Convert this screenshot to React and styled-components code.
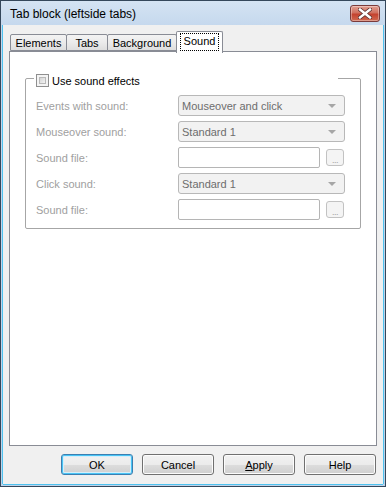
import React from "react";
import styled, { createGlobalStyle } from "styled-components";

const GlobalStyle = createGlobalStyle`
  html, body {
    margin: 0;
    padding: 0;
    background: #ffffff;
  }
  body {
    font-family: "Liberation Sans", Arial, sans-serif;
    font-size: 11px;
  }
`;

const Window = styled.div`
  width: 386px;
  height: 487px;
  box-sizing: border-box;
  border: 1px solid #34475b;
  background: linear-gradient(#d4e3f3, #c2d6ec 30px, #bcd3ea);
  padding: 0 2px 2px 2px;
  display: flex;
  flex-direction: column;
`;

const TitleBar = styled.div`
  height: 24px;
  display: flex;
  align-items: center;
  justify-content: space-between;
  padding: 0 3px 0 7px;
`;

const Title = styled.span`
  font-size: 12px;
  color: #000000;
  margin-top: 1px;
`;

const CloseButton = styled.div`
  width: 30px;
  height: 17px;
  box-sizing: border-box;
  margin-top: 1px;
  border: 1px solid #7a3b3b;
  border-radius: 3px;
  background: linear-gradient(#e2a093, #d0705f 45%, #c4422f 55%, #d06a52);
  box-shadow: inset 0 0 0 1px rgba(255, 255, 255, 0.35);
  display: flex;
  align-items: center;
  justify-content: center;
`;

const Client = styled.div`
  flex: 1;
  background: #f0f0f0;
  box-shadow: -1px 0 0 #4fc2ef, 1px 0 0 #4fc2ef, 0 1px 0 #4fc2ef;
  display: flex;
  flex-direction: column;
  padding: 6px 6px 9px 6px;
  box-sizing: border-box;
`;

const TabRow = styled.div`
  display: flex;
  align-items: flex-end;
  height: 20px;
  padding-left: 1px;
  position: relative;
  z-index: 2;
`;

const Tab = styled.div`
  box-sizing: border-box;
  width: ${(p) => p.$w}px;
  height: ${(p) => (p.$active ? 22 : 17)}px;
  margin-right: -1px;
  margin-bottom: ${(p) => (p.$active ? -2 : 0)}px;
  border: 1px solid #898c95;
  border-bottom: ${(p) => (p.$active ? "none" : "1px solid #898c95")};
  border-radius: 2px 2px 0 0;
  background: ${(p) =>
    p.$active ? "#ffffff" : "linear-gradient(#f3f3f3, #ebebeb 50%, #dedede)"};
  color: #000000;
  display: flex;
  align-items: ${(p) => (p.$active ? "flex-start" : "center")};
  justify-content: center;
  padding-top: ${(p) => (p.$active ? 1 : 0)}px;
  position: relative;
  z-index: ${(p) => (p.$active ? 3 : 1)};
`;

const FocusLabel = styled.span`
  border: 1px dotted #000000;
  padding: 1px 3px 2px;
  line-height: 13px;
`;

const Panel = styled.div`
  flex: 1;
  background: #ffffff;
  border: 1px solid #898c95;
  padding: 26px 15px 0 15px;
`;

const GroupBox = styled.div`
  position: relative;
  border: 1px solid #a6a6a6;
  border-radius: 2px;
  padding: 16px 15px 8px 10px;
  display: grid;
  grid-template-columns: 142px 1fr;
  grid-auto-rows: 21px;
  row-gap: 5px;
  align-items: center;
`;

const Legend = styled.div`
  position: absolute;
  top: -5px;
  left: 8px;
  width: 302px;
  height: 13px;
  padding-left: 2px;
  background: #ffffff;
  display: flex;
  align-items: center;
  gap: 3px;
  color: #000000;
`;

const CheckBox = styled.div`
  width: 13px;
  height: 13px;
  box-sizing: border-box;
  border: 1px solid #8f8f8f;
  background: #f4f4f4;
  padding: 2px;
  &::after {
    content: "";
    display: block;
    width: 100%;
    height: 100%;
    box-sizing: border-box;
    border: 1px solid #b9b9b9;
    background: linear-gradient(135deg, #d4d4d4, #f3f3f3);
  }
`;

const Label = styled.div`
  color: #a0a0a0;
`;

const Combo = styled.div`
  height: 21px;
  box-sizing: border-box;
  border: 1px solid #b8b8b8;
  border-radius: 3px;
  background: #f2f2f2;
  color: #6d6d6d;
  display: flex;
  align-items: center;
  justify-content: space-between;
  padding: 0 8px 0 3px;
`;

const Arrow = styled.span`
  width: 0;
  height: 0;
  border-left: 4px solid transparent;
  border-right: 4px solid transparent;
  border-top: 4px solid #a6a6a6;
`;

const FileRow = styled.div`
  display: flex;
  align-items: center;
  gap: 6px;
  height: 21px;
`;

const TextField = styled.div`
  flex: 1;
  height: 21px;
  box-sizing: border-box;
  border: 1px solid #b5b5b5;
  border-radius: 2px;
  background: #ffffff;
`;

const BrowseButton = styled.div`
  width: 18px;
  height: 17px;
  box-sizing: border-box;
  margin-right: 1px;
  border: 1px solid #c2c2c2;
  border-radius: 3px;
  background: #f4f4f4;
  color: #a0a0a0;
  font-size: 9px;
  display: flex;
  align-items: flex-end;
  justify-content: center;
  line-height: 10px;
  letter-spacing: -0.5px;
`;

const ButtonRow = styled.div`
  display: flex;
  justify-content: flex-end;
  gap: 9px;
  padding-top: 8px;
  padding-right: 1px;
`;

const Button = styled.div`
  width: 72px;
  height: 21px;
  box-sizing: border-box;
  border: 1px solid ${(p) => (p.$default ? "#3c7fb1" : "#707070")};
  border-radius: 3px;
  background: linear-gradient(#f2f2f2, #ebebeb 50%, #dddddd 50%, #cfcfcf);
  box-shadow: ${(p) =>
    p.$default
      ? "inset 0 0 0 1px #48c4f5, inset 0 0 0 2px #d5eefa"
      : "inset 0 0 0 1px #fcfcfc"};
  color: #000000;
  display: flex;
  align-items: center;
  justify-content: center;
`;

const tabs = [
  { label: "Elements", w: 57 },
  { label: "Tabs", w: 42 },
  { label: "Background", w: 70 },
  { label: "Sound", w: 47, active: true },
];

const CloseGlyph = () => (
  <svg width="14" height="11" viewBox="0 0 14 11">
    <path
      d="M2 1.5 L12 9.5 M12 1.5 L2 9.5"
      stroke="#5a3030"
      strokeWidth="4"
      strokeLinecap="square"
    />
    <path
      d="M2 1.5 L12 9.5 M12 1.5 L2 9.5"
      stroke="#ffffff"
      strokeWidth="2.4"
      strokeLinecap="square"
    />
  </svg>
);

const App = () => (
  <>
    <GlobalStyle />
    <Window>
      <TitleBar>
        <Title>Tab block (leftside tabs)</Title>
        <CloseButton>
          <CloseGlyph />
        </CloseButton>
      </TitleBar>
      <Client>
        <TabRow>
          {tabs.map((t) => (
            <Tab key={t.label} $w={t.w} $active={t.active}>
              {t.active ? <FocusLabel>{t.label}</FocusLabel> : t.label}
            </Tab>
          ))}
        </TabRow>
        <Panel>
          <GroupBox>
            <Legend>
              <CheckBox />
              <span>Use sound effects</span>
            </Legend>

            <Label>Events with sound:</Label>
            <Combo>
              Mouseover and click
              <Arrow />
            </Combo>

            <Label>Mouseover sound:</Label>
            <Combo>
              Standard 1
              <Arrow />
            </Combo>

            <Label>Sound file:</Label>
            <FileRow>
              <TextField />
              <BrowseButton>...</BrowseButton>
            </FileRow>

            <Label>Click sound:</Label>
            <Combo>
              Standard 1
              <Arrow />
            </Combo>

            <Label>Sound file:</Label>
            <FileRow>
              <TextField />
              <BrowseButton>...</BrowseButton>
            </FileRow>
          </GroupBox>
        </Panel>
        <ButtonRow>
          <Button $default>OK</Button>
          <Button>Cancel</Button>
          <Button>
            <span>
              <u>A</u>pply
            </span>
          </Button>
          <Button>Help</Button>
        </ButtonRow>
      </Client>
    </Window>
  </>
);

export default App;
